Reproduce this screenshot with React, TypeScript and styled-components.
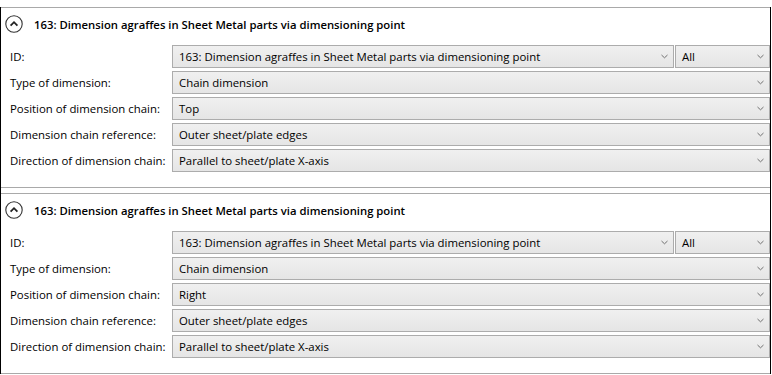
import React from "react";
import styled, { createGlobalStyle } from "styled-components";

const Global = createGlobalStyle`
  html, body { margin: 0; padding: 0; background: #fff; }
  body { font-family: "Open Sans", "Noto Sans", sans-serif; font-size: 11.4px; color: #000; }
`;

const Frame = styled.div`
  margin-top: 7px;
  width: 769px;
  border-left: 1px solid #000;
  border-right: 1px solid #000;
  display: flex;
  flex-direction: column;
  gap: 5px;
`;

const Section = styled.section`
  border-top: 1px solid #a9a9a9;
  border-bottom: 1px solid #a9a9a9;
  padding-bottom: 15px;
`;

const Header = styled.div`
  height: 32px;
  display: flex;
  align-items: center;
  gap: 11px;
  padding-left: 4px;
`;

const Toggle = styled.span`
  width: 18px;
  height: 18px;
  display: flex;
  align-items: center;
  justify-content: center;
  flex: none;
`;

const Title = styled.span`
  font-weight: 600;
  font-size: 11.3px;
  color: #000;
`;

const Rows = styled.div`
  padding-top: 5px;
  display: flex;
  flex-direction: column;
  gap: 3px;
`;

const Row = styled.div`
  display: flex;
  align-items: center;
  height: 23px;
`;

const Label = styled.span`
  box-sizing: border-box;
  width: 171px;
  padding-left: 9px;
  flex: none;
  white-space: nowrap;
`;

const Selects = styled.div`
  flex: 1;
  display: flex;
  gap: 1px;
  height: 100%;
`;

const Combo = styled.div<{ $w?: number }>`
  box-sizing: border-box;
  height: 23px;
  ${(p) => (p.$w ? `width: ${p.$w}px; flex: none;` : `flex: 1;`)}
  border: 1px solid #acacac;
  background: linear-gradient(#f0f0f0, #e5e5e5);
  display: flex;
  align-items: center;
  padding: 0 5px 0 6px;
  white-space: nowrap;
  overflow: hidden;
`;

const ComboText = styled.span`
  flex: 1;
`;

const Chevron = () => (
  <svg width="7" height="5" viewBox="0 0 7 5">
    <polyline points="0.5,1 3.5,3.8 6.5,1" fill="none" stroke="#707070" strokeWidth="1" />
  </svg>
);

const CollapseIcon = () => (
  <svg width="18" height="18" viewBox="0 0 18 18">
    <circle cx="9" cy="9" r="8.2" fill="#fff" stroke="#333" strokeWidth="1.1" />
    <polyline points="5.6,10.6 9,7.2 12.4,10.6" fill="none" stroke="#222" strokeWidth="1.8" />
  </svg>
);

type Field = { label: string; value: string; extra?: string };

const title = "163: Dimension agraffes in Sheet Metal parts via dimensioning point";

const sections: Field[][] = [
  [
    { label: "ID:", value: title, extra: "All" },
    { label: "Type of dimension:", value: "Chain dimension" },
    { label: "Position of dimension chain:", value: "Top" },
    { label: "Dimension chain reference:", value: "Outer sheet/plate edges" },
    { label: "Direction of dimension chain:", value: "Parallel to sheet/plate X-axis" },
  ],
  [
    { label: "ID:", value: title, extra: "All" },
    { label: "Type of dimension:", value: "Chain dimension" },
    { label: "Position of dimension chain:", value: "Right" },
    { label: "Dimension chain reference:", value: "Outer sheet/plate edges" },
    { label: "Direction of dimension chain:", value: "Parallel to sheet/plate X-axis" },
  ],
];

export default function App() {
  return (
    <>
      <Global />
      <Frame>
        {sections.map((fields, i) => (
          <Section key={i}>
            <Header>
              <Toggle>
                <CollapseIcon />
              </Toggle>
              <Title>{title}</Title>
            </Header>
            <Rows>
              {fields.map((f) => (
                <Row key={f.label}>
                  <Label>{f.label}</Label>
                  <Selects>
                    <Combo>
                      <ComboText>{f.value}</ComboText>
                      <Chevron />
                    </Combo>
                    {f.extra && (
                      <Combo $w={95}>
                        <ComboText>{f.extra}</ComboText>
                        <Chevron />
                      </Combo>
                    )}
                  </Selects>
                </Row>
              ))}
            </Rows>
          </Section>
        ))}
      </Frame>
    </>
  );
}
